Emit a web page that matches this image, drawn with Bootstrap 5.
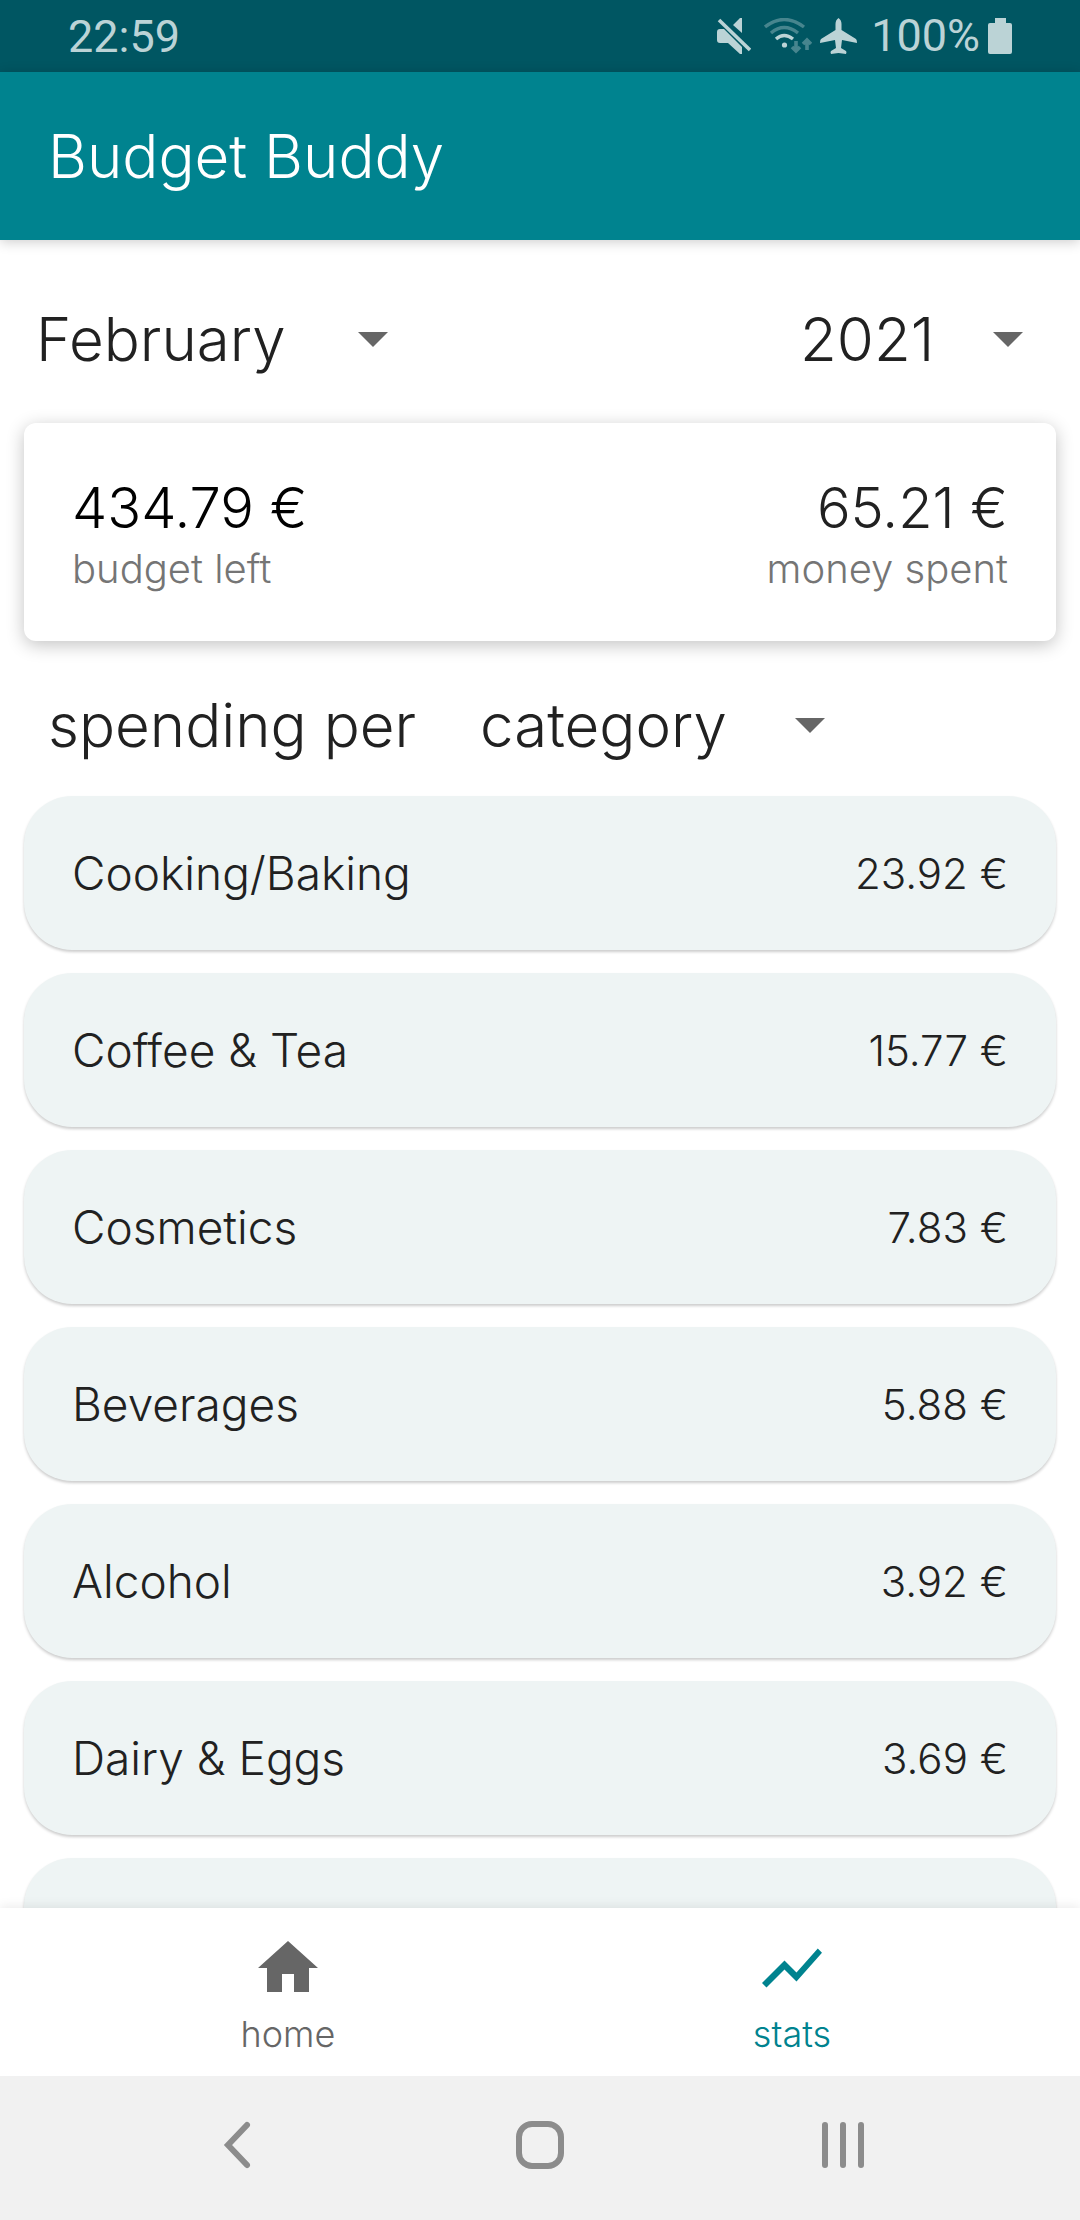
<!DOCTYPE html>
<html lang="en">
<head>
<meta charset="utf-8">
<meta name="viewport" content="width=device-width, initial-scale=1">
<title>Budget Buddy</title>
<link href="https://cdn.jsdelivr.net/npm/bootstrap@5.3.0/dist/css/bootstrap.min.css" rel="stylesheet">
<style>
  :root { --teal: #00838f; --teal-dark: #005662; --ink: #212121; --status: #bbd3d6; }
  body { font-family: Inter, "Open Sans", sans-serif; color: var(--ink); background: #fff; }
  .status-bar { height: 72px; padding: 0 68px; background: var(--teal-dark); color: var(--status); font-family: Roboto, sans-serif; font-size: 45px; line-height: 74px; }
  .status-icons { gap: 8px; }
  .status-level { padding-left: 6px; }
  .status-mute { margin-right: 5px; }
  .app-bar { height: 168px; padding: 0 48px; background: var(--teal); box-shadow: 0 2px 12px rgba(0,0,0,.2); z-index: 2; }
  .app-title { font-size: 60px; line-height: 72px; font-weight: 300; }
  .screen { padding: 0 24px; min-height: 0; }
  .filter-row { padding: 51px 24px 36px 0; }
  .group-row { padding: 36px 0 23px 24px; gap: 52px; }
  .picker, .group-label { font-size: 60px; line-height: 96px; font-weight: 300; color: var(--ink); }
  .picker { height: 96px; width: auto; padding: 0 80px 0 12px; border: 0; border-radius: 4px; background-color: transparent;
    background-image: url("data:image/svg+xml,%3Csvg xmlns='http://www.w3.org/2000/svg' viewBox='0 0 30 15'%3E%3Cpath fill='%23666' d='M0 0h30L15 15z'/%3E%3C/svg%3E");
    background-size: 30px 15px; background-position: right 9px center; }
  .picker-month { width: 373px; }
  .picker-year { width: 244px; }
  .picker-group { width: 366px; }
  .summary { padding: 52px 48px 44px; border-radius: 12px; box-shadow: 0 4px 18px rgba(0,0,0,.24); }
  .sum-value { font-size: 56px; line-height: 66px; font-weight: 300; }
  .sum-note { font-size: 40px; line-height: 56px; font-weight: 300; color: #757575; }
  .spend-list { gap: 23px; }
  .spend-item { min-height: 154px; padding: 0 48px; border-radius: 48px; background: #eef4f4; box-shadow: 0 2px 3px rgba(0,0,0,.2); }
  .spend-name { font-size: 46px; font-weight: 300; }
  .spend-sum { font-size: 42px; font-weight: 300; }
  .tab-bar { height: 168px; box-shadow: 0 -2px 10px rgba(0,0,0,.08); z-index: 2; }
  .tab-link { width: 504px; padding-top: 24px; color: #666; font-size: 36px; line-height: 48px; font-weight: 300; text-decoration: none; }
  .tab-link.active { color: var(--teal); }
  .tab-link svg { margin-bottom: 6px; }
  .system-bar { height: 144px; padding-bottom: 6px; background: #f1f1f1; gap: 231px; z-index: 3; }
  .system-bar button { width: 72px; height: 72px; padding: 0; border: 0; line-height: 0; background: none; color: #8c8c8c; }
</style>
<script src="https://cdn.jsdelivr.net/npm/bootstrap@5.3.0/dist/js/bootstrap.bundle.min.js"></script>
</head>
<body>
<div class="vh-100 d-flex flex-column overflow-hidden">
  <div class="status-bar d-flex justify-content-between flex-shrink-0">
    <span>22:59</span>
    <div class="status-icons d-flex align-items-center">
      <svg class="status-mute" width="34" height="36" viewBox="0 0 34 36" fill="currentColor" aria-hidden="true">
        <path d="M3 11h4L25 29v7h-2L11 25H3q-3 0-3-3v-8q0-3 3-3zM16 7l7-7h2v15z"/>
        <path d="M2 2l31 30" stroke="currentColor" stroke-width="3.6"/>
      </svg>
      <svg width="48" height="36" viewBox="0 0 48 36" fill="none" stroke="currentColor" stroke-width="3.4" aria-hidden="true">
        <g opacity=".38"><path d="M1 9Q20-6 40 9M7 15q13-11 27 0"/><path d="M32 23v10m-4-4l4 4 4-4M43 32V22m-4 4l4-4 4 4" stroke-width="3.6"/></g>
        <path d="M12 21q8-7 17 0"/><circle cx="20.500" cy="27" r="2.600" fill="currentColor" stroke="none"/>
      </svg>
      <svg width="37" height="36" viewBox="0 0 37 36" fill="currentColor" aria-hidden="true">
        <path d="M18.500 0q3 2 3 6v6L36 21q1 1 1 4l-15-3-1 8 5 3q1 1 0 3l-7.500-1L11 36q-1-2 0-3l5-3-1-8-15 3q0-3 1-4l14.500-9V6q0-4 3-6z"/>
      </svg>
      <span class="status-level">100%</span>
      <svg width="24" height="36" viewBox="0 0 24 36" fill="currentColor" aria-hidden="true"><path d="M7 0h11v5h4q2 0 2 2v27q0 2-2 2H2q-2 0-2-2V7q0-2 2-2h5z"/></svg>
    </div>
  </div>

  <header class="app-bar d-flex align-items-center text-white flex-shrink-0">
    <h1 class="app-title m-0">Budget Buddy</h1>
  </header>

  <main class="screen flex-fill d-flex flex-column overflow-hidden">
    <div class="filter-row d-flex justify-content-between">
      <select class="form-select picker picker-month" aria-label="Month"><option>February</option></select>
      <select class="form-select picker picker-year" aria-label="Year"><option>2021</option></select>
    </div>

    <section class="summary bg-white d-flex justify-content-between">
      <div>
        <div class="sum-value text-black">434.79 €</div>
        <div class="sum-note">budget left</div>
      </div>
      <div class="text-end">
        <div class="sum-value">65.21 €</div>
        <div class="sum-note">money spent</div>
      </div>
    </section>

    <div class="group-row d-flex">
      <label class="group-label" for="group">spending per</label>
      <select class="form-select picker picker-group" id="group"><option>category</option></select>
    </div>

    <ul class="spend-list list-unstyled d-flex flex-column m-0">
      <li class="spend-item d-flex align-items-center justify-content-between"><span class="spend-name">Cooking/Baking</span><span class="spend-sum">23.92 €</span></li>
      <li class="spend-item d-flex align-items-center justify-content-between"><span class="spend-name">Coffee &amp; Tea</span><span class="spend-sum">15.77 €</span></li>
      <li class="spend-item d-flex align-items-center justify-content-between"><span class="spend-name">Cosmetics</span><span class="spend-sum">7.83 €</span></li>
      <li class="spend-item d-flex align-items-center justify-content-between"><span class="spend-name">Beverages</span><span class="spend-sum">5.88 €</span></li>
      <li class="spend-item d-flex align-items-center justify-content-between"><span class="spend-name">Alcohol</span><span class="spend-sum">3.92 €</span></li>
      <li class="spend-item d-flex align-items-center justify-content-between"><span class="spend-name">Dairy &amp; Eggs</span><span class="spend-sum">3.69 €</span></li>
      <li class="spend-item"></li>
    </ul>
  </main>

  <nav class="tab-bar bg-white d-flex justify-content-center flex-shrink-0">
    <a class="tab-link d-flex flex-column align-items-center" href="#home">
      <svg width="72" height="72" viewBox="0 0 24 24" fill="currentColor" aria-hidden="true"><path d="M10 20v-6h4v6h5v-8h3L12 3 2 12h3v8z"/></svg>
      home
    </a>
    <a class="tab-link active d-flex flex-column align-items-center" href="#stats" aria-current="page">
      <svg width="72" height="72" viewBox="0 0 24 24" fill="currentColor" aria-hidden="true"><path d="M3.500 18.490l6-6.010 4 4L22 6.920l-1.410-1.410-7.090 7.970-4-4L2 16.990z"/></svg>
      stats
    </a>
  </nav>

  <div class="system-bar d-flex justify-content-center align-items-center flex-shrink-0">
    <button type="button" aria-label="Back"><svg width="72" height="72" viewBox="0 0 72 72" fill="none" stroke="currentColor" stroke-width="6" stroke-linecap="round" aria-hidden="true"><path d="M46 16L27 36l19 20"/></svg></button>
    <button type="button" aria-label="Home"><svg width="72" height="72" viewBox="0 0 72 72" fill="none" stroke="currentColor" stroke-width="6" aria-hidden="true"><rect x="15" y="15" width="42" height="42" rx="13"/></svg></button>
    <button type="button" aria-label="Recent apps"><svg width="72" height="72" viewBox="0 0 72 72" fill="none" stroke="currentColor" stroke-width="6" stroke-linecap="round" aria-hidden="true"><path d="M18 16v40M36 16v40M54 16v40"/></svg></button>
  </div>
</div>
</body>
</html>
